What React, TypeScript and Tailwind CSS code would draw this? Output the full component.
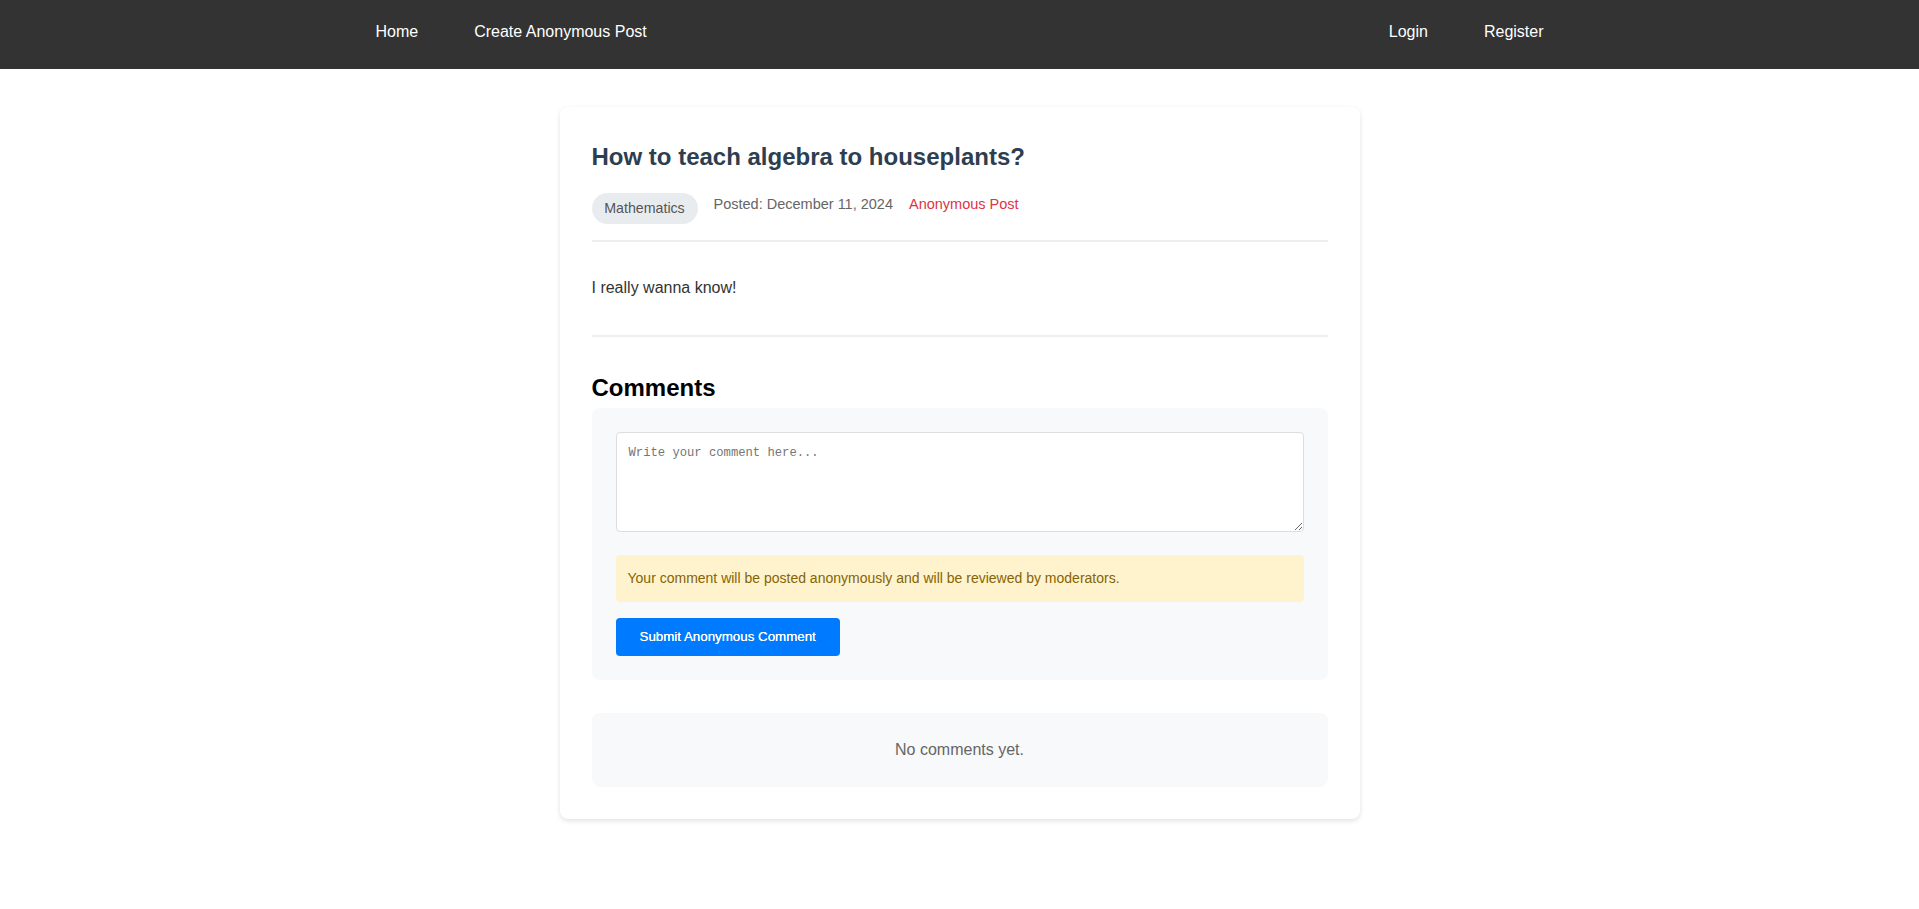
import React from "react";

export default function App() {
  return (
    <div className="min-h-[909px] bg-white font-['Liberation_Sans',Arial,sans-serif]">
      <nav className="h-[69px] bg-[#333333]">
        <div className="mx-auto flex max-w-[1168px] justify-between pt-[23px] text-[16px] leading-[18px] text-white">
          <div className="flex gap-[56px]">
            <a href="#" className="text-white">Home</a>
            <a href="#" className="text-white">Create Anonymous Post</a>
          </div>
          <div className="flex gap-[56px]">
            <a href="#" className="text-white">Login</a>
            <a href="#" className="text-white">Register</a>
          </div>
        </div>
      </nav>

      <main className="mx-auto mt-[38px] w-[800px] rounded-lg bg-white p-8 shadow-[0_2px_5px_rgba(0,0,0,0.12)]">
        <div className="border-b-2 border-[#eeeeee] pb-4">
          <h1 className="mt-[4px] text-[24px] font-bold leading-[28px] text-[#2c3e50]">
            How to teach algebra to houseplants?
          </h1>
          <div className="mt-[22px] flex items-start gap-4 text-[14.2px] leading-[17px]">
            <span className="rounded-full bg-[#e9ecef] px-[12.8px] py-[7px] text-[#555555]">Mathematics</span>
            <span className="mt-[3px] text-[14.5px] text-[#666666]">Posted: December 11, 2024</span>
            <span className="mt-[3px] text-[14.5px] text-[#dc3545]">Anonymous Post</span>
          </div>
        </div>

        <div className="border-b-2 border-[#eeeeee] pb-[38px] pt-[37px]">
          <p className="text-[16px] leading-[18px] text-[#333333]">I really wanna know!</p>
        </div>

        <h3 className="mt-[37px] text-[24px] font-bold leading-[28px] text-black">Comments</h3>

        <div className="mt-[6px] rounded-lg bg-[#f8f9fa] p-6">
          <textarea
            placeholder="Write your comment here..."
            className="block h-[100px] w-full rounded border border-[#dddddd] bg-white px-3 pt-[13px] font-['Liberation_Mono',monospace] text-[12.2px] leading-[15px] text-[#333] placeholder:text-[#757575] focus:outline-none"
          />
          <div className="mt-[23px] rounded bg-[#fff3cd] p-3 text-[14px] leading-[23px] text-[#856404]">
            Your comment will be posted anonymously and will be reviewed by moderators.
          </div>
          <button className="mt-4 block h-[38px] rounded bg-[#007bff] px-6 text-[13.33px] leading-[16px] text-white [text-shadow:0_0_0.4px_#ffffff]">
            Submit Anonymous Comment
          </button>
        </div>

        <div className="mt-[33px] flex h-[74px] items-center justify-center rounded-lg bg-[#f8f9fa] text-[16px] leading-[18px] text-[#666666]">
          No comments yet.
        </div>
      </main>
    </div>
  );
}
